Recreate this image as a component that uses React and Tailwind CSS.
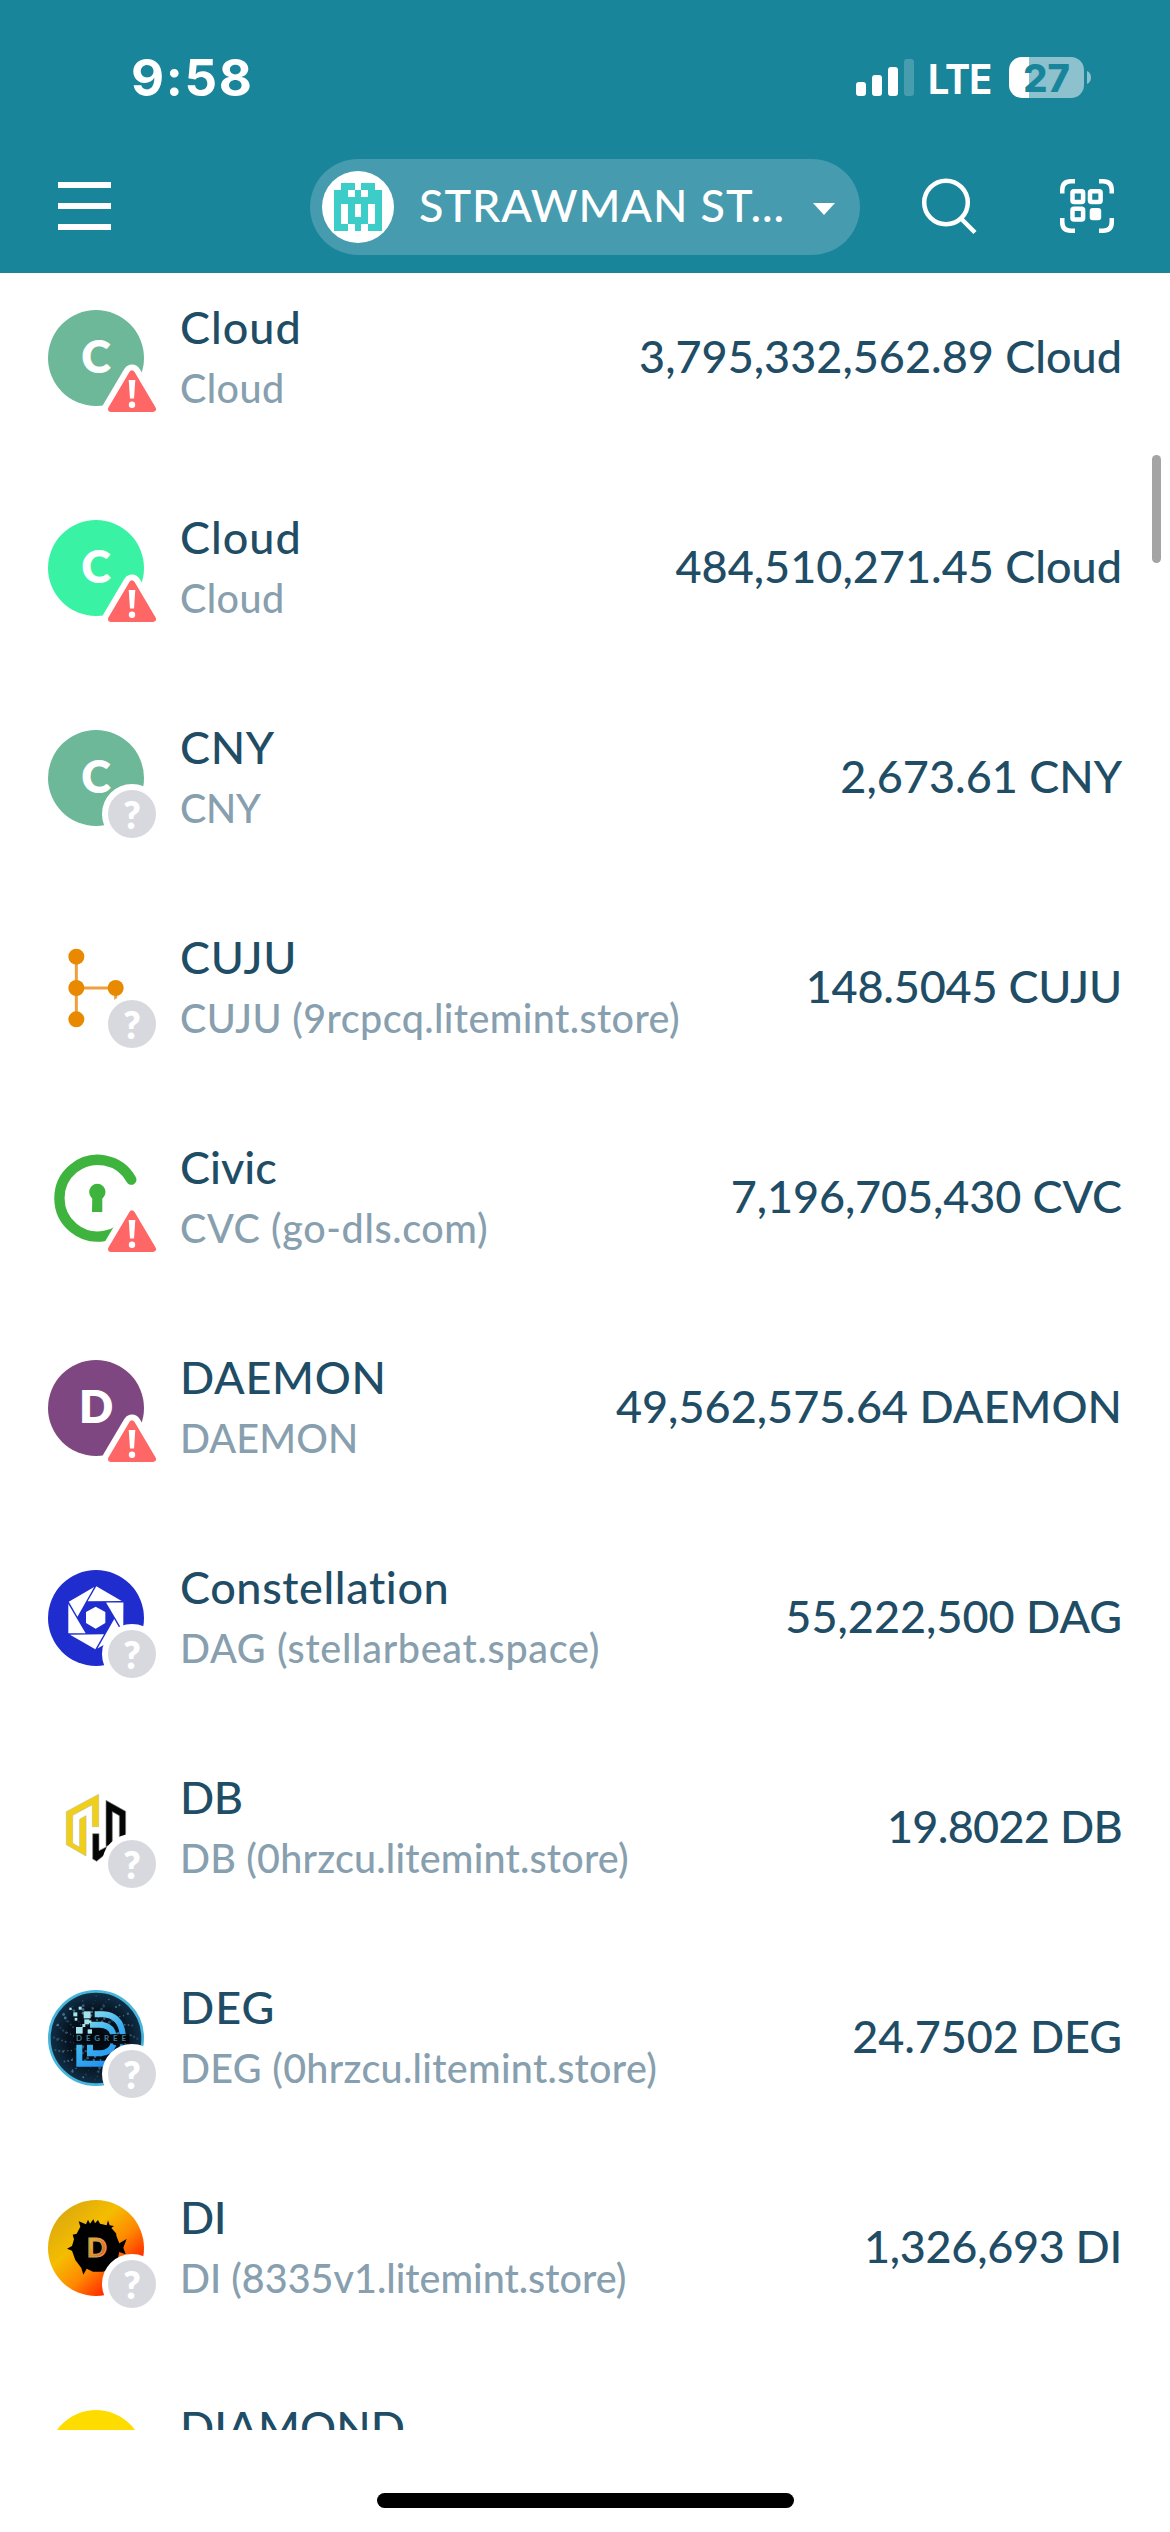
import React from "react";

const IDENTICON = [
  ".XX.XX.",
  "XX.X.XX",
  "XXXXXXX",
  "X.X.X.X",
  "X.X.X.X",
  "X.XXX.X",
  "XX.X.XX",
];

function Identicon() {
  return (
    <div className="flex size-[72px] items-center justify-center rounded-full bg-white">
      <svg viewBox="0 0 7 7" className="size-12" shapeRendering="crispEdges">
        {IDENTICON.flatMap((row, y) =>
          [...row].map((cell, x) =>
            cell === "X" ? <rect key={`${x}-${y}`} x={x} y={y} width="1" height="1" fill="#3dcdc9" /> : null
          )
        )}
      </svg>
    </div>
  );
}

function StatusBar() {
  return (
    <div className="flex h-[159px] items-start justify-between pr-[79px] pl-[131px]">
      <div className="mt-[48px] font-[Inter,sans-serif] text-[51px] leading-[60px] font-bold tracking-[1.7px]">9:58</div>
      <div className="mt-[57px] flex items-start">
        <svg width="58" height="40" viewBox="0 0 58 40" fill="#fff">
          <rect x="0" y="25" width="10" height="14" rx="3" />
          <rect x="16" y="18" width="10" height="21" rx="3" />
          <rect x="32" y="10" width="10" height="29" rx="3" />
          <rect x="48" y="2" width="10" height="37" rx="3" fillOpacity="0.2" />
        </svg>
        <span className="-mt-[3px] ml-[14px] w-[81px] origin-left scale-x-[0.92] font-[Inter,sans-serif] text-[41px] leading-[50px] font-bold tracking-[-1px]">
          LTE
        </span>
        <div className="flex h-[41px] w-[75px] items-center justify-center rounded-[13px] bg-[linear-gradient(90deg,#fff_20px,#8cc1cd_20px)] font-[Inter,sans-serif] text-[38px] leading-none font-extrabold text-[#19859a]">
          27
        </div>
        <svg width="4" height="13" viewBox="0 0 4 13" className="mt-[14px] ml-[3px]">
          <path d="M0 0C2.500 1 4 3.500 4 6.500S2.500 12 0 13Z" fill="#8cc1cd" />
        </svg>
      </div>
    </div>
  );
}

function NavBar() {
  return (
    <div className="flex h-24 items-center pl-[58px]">
      <div className="mb-[3px] flex w-[53px] flex-col gap-[15px]">
        <div className="h-[6px] bg-white" />
        <div className="h-[6px] bg-white" />
        <div className="h-[6px] bg-white" />
      </div>
      <div className="ml-[199px] flex h-24 w-[550px] items-center rounded-full bg-[#469bae] pl-3">
        <Identicon />
        <span className="mb-[4px] ml-[25px] w-[394px] text-[45px] leading-[60px] tracking-[0.9px]">STRAWMAN ST...</span>
        <svg width="22" height="12" viewBox="0 0 22 12" className="mt-[4px]">
          <path d="M0 0H22L11 12Z" fill="#fff" />
        </svg>
      </div>
      <svg width="60" height="60" viewBox="0 0 60 60" className="ml-[60px]" fill="none" stroke="#fff" strokeWidth="4.500">
        <circle cx="26" cy="25.500" r="21.800" />
        <path d="M41 41.500L55 55.500" />
      </svg>
      <svg width="54" height="54" viewBox="0 0 54 54" className="mb-[3px] ml-[80px]" fill="none" stroke="#fff" strokeWidth="4.500">
        <path d="M2.250 14.500V11Q2.250 2.250 11 2.250H15M39 2.250H43Q51.750 2.250 51.750 11V14.500M51.750 39V43Q51.750 51.750 43 51.750H39M15 51.750H11Q2.250 51.750 2.250 43V39" />
        <rect x="12.500" y="12.200" width="10.600" height="10.800" rx="1.500" />
        <rect x="30" y="12.200" width="10.600" height="10.800" rx="1.500" />
        <rect x="12.500" y="29.700" width="10.600" height="10.800" rx="1.500" />
        <rect x="29.700" y="29" width="11.500" height="12.200" rx="3" fill="#fff" stroke="none" />
      </svg>
    </div>
  );
}

function WarningBadge() {
  return (
    <svg viewBox="0 0 66 60" className="absolute top-[48px] left-[51px] h-[60px] w-[66px]">
      <path d="M33 15.500L54 51H12Z" fill="#fff" stroke="#fff" strokeWidth="18" strokeLinejoin="round" />
      <path d="M33 15.500L54 51H12Z" fill="#ff6666" stroke="#ff6666" strokeWidth="6" strokeLinejoin="round" />
      <path d="M29.700 22H36.300L35 40.500H31Z" fill="#fff" />
      <circle cx="33" cy="46.700" r="3.200" fill="#fff" />
    </svg>
  );
}

function UnknownBadge() {
  return (
    <div className="absolute top-[54px] left-[54px] flex size-[60px] items-center justify-center rounded-full border-[6px] border-white bg-[#d8d9df] text-[37px] leading-none font-extrabold text-white">
      ?
    </div>
  );
}

function LetterLogo({ letter, className }) {
  return (
    <div className={`flex size-24 items-center justify-center rounded-full pb-[4px] text-[45px] leading-none font-extrabold text-white ${className}`}>
      {letter}
    </div>
  );
}

const svgProps = { viewBox: "0 0 288 288", className: "size-24 overflow-visible" };

function CujuLogo() {
  return (
    <svg {...svgProps} fill="#e98900">
      <path d="M85 50V238M85 144H203V240" fill="none" stroke="#efa03c" strokeWidth="9" />
      <circle cx="85" cy="50" r="24" />
      <circle cx="85" cy="144" r="24" />
      <circle cx="85" cy="238" r="24" />
      <circle cx="203" cy="144" r="24" />
    </svg>
  );
}

function CivicLogo() {
  return (
    <svg {...svgProps} fill="#3eb33e">
      <path d="M250 89A115 115 0 1 0 250 200" fill="none" stroke="#3eb33e" strokeWidth="31" strokeLinecap="round" />
      <circle cx="148" cy="126" r="24.500" />
      <path d="M133 135H163V186H132Z" />
    </svg>
  );
}

function ConstellationLogo() {
  return (
    <svg {...svgProps}>
      <circle cx="144" cy="144" r="144" fill="#1f2dcf" />
      {[0, 60, 120, 180, 240, 300].map((a) => (
        <path key={a} d="M145 49L221 93L119 94Z" fill="#fff" transform={`rotate(${a} 143.500 143.500)`} />
      ))}
      <path d="M143 110L172 126V159L143 176L114 159V126Z" fill="#fff" />
    </svg>
  );
}

function DbLogo() {
  return (
    <svg {...svgProps}>
      <path
        d="M55 95L152 43V140H133V74L74 106V190L95 202V118L114 107V228L55 194Z"
        fill="#f0cf1a"
        stroke="#c9bd7c"
        strokeWidth="2"
      />
      <path
        d="M174 61L233 94V190H214V107L193 95V190L174 200ZM134 161H153V212L176 200L170 224L146 244L134 237Z"
        fill="#050505"
        stroke="#8a8a8a"
        strokeWidth="2"
      />
    </svg>
  );
}

const SPECKS = Array.from({ length: 170 }, (_, i) => {
  const angle = i * 2.39996;
  const r = 45 + ((i * 53) % 83);
  return { x: 144 + Math.cos(angle) * r, y: 144 + Math.sin(angle) * r, s: 1.5 + ((i * 7) % 5) * 0.7, o: 0.2 + ((i * 11) % 6) * 0.09 };
});

const PIXELS = [
  [107, 64, 21], [76, 67, 12], [64, 53, 7], [92, 50, 9], [80, 84, 8], [109, 88, 15],
  [84, 111, 20], [122, 91, 8], [103, 102, 9], [119, 118, 13],
];

function DegLogo() {
  return (
    <svg {...svgProps}>
      <defs>
        <linearGradient id="deg-letter" gradientUnits="userSpaceOnUse" x1="90" y1="70" x2="200" y2="240">
          <stop offset="0" stopColor="#9be4ee" />
          <stop offset="0.45" stopColor="#3fb4ee" />
          <stop offset="1" stopColor="#1486f5" />
        </linearGradient>
        <radialGradient id="deg-back">
          <stop offset="0" stopColor="#02060c" />
          <stop offset="0.6" stopColor="#06131f" />
          <stop offset="1" stopColor="#103049" />
        </radialGradient>
      </defs>
      <circle cx="144" cy="144" r="140" fill="url(#deg-back)" stroke="#45b5da" strokeWidth="8" />
      {SPECKS.map((d, i) => (
        <circle key={i} cx={d.x} cy={d.y} r={d.s} fill="#6f9fc4" opacity={d.o} />
      ))}
      <path
        d="M140 73H165Q218 76 224 133M126 104H155Q190 106 196 133M94 164V221H170Q214 214 226 164M126 164V190H158Q188 188 196 164"
        fill="none"
        stroke="url(#deg-letter)"
        strokeWidth="18"
      />
      {PIXELS.map(([x, y, s]) => (
        <rect key={`${x}-${y}`} x={x} y={y} width={s} height={s} fill="#a4e2ec" />
      ))}
      <rect x="78" y="133" width="166" height="26" fill="#03080e" />
      <text x="84" y="154" fontSize="24" fontWeight="700" fill="#3d7f98" textLength="150" fontFamily="Lato, sans-serif">
        DEGREE
      </text>
    </svg>
  );
}

function DiLogo() {
  return (
    <svg {...svgProps}>
      <defs>
        <linearGradient id="di-back" x1="0.1" y1="0.1" x2="0.85" y2="0.9">
          <stop offset="0" stopColor="#dba80f" />
          <stop offset="0.36" stopColor="#f4bd00" />
          <stop offset="0.62" stopColor="#ff8a00" />
          <stop offset="0.84" stopColor="#ff3a00" />
          <stop offset="1" stopColor="#ff1500" />
        </linearGradient>
        <linearGradient id="di-letter" x1="0" y1="0" x2="1" y2="1">
          <stop offset="0.3" stopColor="#efa51c" />
          <stop offset="1" stopColor="#ef3d12" />
        </linearGradient>
      </defs>
      <circle cx="144" cy="144" r="144" fill="url(#di-back)" />
      <path
        d="M97 80L92 64L114 73L120 59L126 71L136 58L141 70L150 60L156 71L176 76L180 61L185 76L198 78L190 84L204 100L206 110L214 130L236 117L226 143L233 163L214 156L208 182L190 204L165 215H135L116 206L106 224L100 204L82 180L72 152L57 146L72 138L78 118L74 104L86 101Z"
        fill="#000"
      />
      <text x="147" y="171" textAnchor="middle" fontSize="80" fontWeight="700" fontFamily="Lato, sans-serif" fill="url(#di-letter)" stroke="#c9a46c" strokeWidth="3">
        D
      </text>
    </svg>
  );
}

const ASSETS = [
  { name: "Cloud", nt: "tracking-[1px]", sub: "Cloud", st: "tracking-[0.4px]", amount: "3,795,332,562.89 Cloud", at: "tracking-[0px]", badge: "warn", logo: <LetterLogo letter="C" className="bg-[#6db899]" /> },
  { name: "Cloud", nt: "tracking-[1px]", sub: "Cloud", st: "tracking-[0.4px]", amount: "484,510,271.45 Cloud", at: "tracking-[0px]", badge: "warn", logo: <LetterLogo letter="C" className="bg-[#3af2a3]" /> },
  { name: "CNY", nt: "tracking-[0.7px]", sub: "CNY", st: "tracking-[-0.3px]", amount: "2,673.61 CNY", at: "tracking-[0px]", badge: "unknown", logo: <LetterLogo letter="C" className="bg-[#6db899]" /> },
  { name: "CUJU", nt: "tracking-[0.7px]", sub: "CUJU (9rcpcq.litemint.store)", st: "tracking-[0.4px]", amount: "148.5045 CUJU", at: "tracking-[-0.2px]", badge: "unknown", logo: <CujuLogo /> },
  { name: "Civic", nt: "tracking-[0px]", sub: "CVC (go-dls.com)", st: "tracking-[0.6px]", amount: "7,196,705,430 CVC", at: "tracking-[-0.1px]", badge: "warn", logo: <CivicLogo /> },
  { name: "DAEMON", nt: "tracking-[0.7px]", sub: "DAEMON", st: "tracking-[0.1px]", amount: "49,562,575.64 DAEMON", at: "tracking-[0px]", badge: "warn", logo: <LetterLogo letter="D" className="bg-[#7f4782]" /> },
  { name: "Constellation", nt: "tracking-[0.6px]", sub: "DAG (stellarbeat.space)", st: "tracking-[0.7px]", amount: "55,222,500 DAG", at: "tracking-[0px]", badge: "unknown", logo: <ConstellationLogo /> },
  { name: "DB", nt: "tracking-[-0.5px]", sub: "DB (0hrzcu.litemint.store)", st: "tracking-[0.2px]", amount: "19.8022 DB", at: "tracking-[-0.7px]", badge: "unknown", logo: <DbLogo /> },
  { name: "DEG", nt: "tracking-[1px]", sub: "DEG (0hrzcu.litemint.store)", st: "tracking-[0.3px]", amount: "24.7502 DEG", at: "tracking-[-0.1px]", badge: "unknown", logo: <DegLogo /> },
  { name: "DI", nt: "tracking-[-0.4px]", sub: "DI (8335v1.litemint.store)", st: "tracking-[0px]", amount: "1,326,693 DI", at: "tracking-[-0.3px]", badge: "unknown", logo: <DiLogo /> },
  { name: "DIAMOND", nt: "tracking-[0.1px]", logo: <LetterLogo className="bg-[#ffdc00]" /> },
];

function AssetRow({ asset }) {
  return (
    <div className="flex h-[210px] shrink-0 items-start px-12">
      <div className="relative mt-[57px] size-24 shrink-0">
        {asset.logo}
        {asset.badge === "warn" && <WarningBadge />}
        {asset.badge === "unknown" && <UnknownBadge />}
      </div>
      <div className="mt-[44px] ml-[36px] flex flex-1 flex-col whitespace-nowrap">
        <span className={`text-[45px] leading-[60px] text-[#1f4d66] ${asset.nt}`}>{asset.name}</span>
        {asset.sub && (
          <span className={`mt-[5px] text-[39.5px] leading-[52px] text-[#879fae] ${asset.st}`}>{asset.sub}</span>
        )}
      </div>
      {asset.amount && (
        <div className={`mt-[73px] text-[45px] leading-[60px] whitespace-nowrap text-[#1f4d66] ${asset.at}`}>{asset.amount}</div>
      )}
    </div>
  );
}

export default function App() {
  return (
    <div className="relative flex h-[2532px] w-[1170px] flex-col overflow-hidden bg-white font-[Lato,sans-serif] font-medium">
      <header className="h-[273px] shrink-0 bg-[#19859a] text-white">
        <StatusBar />
        <NavBar />
      </header>
      <main className="h-[2157px] shrink-0 overflow-hidden">
        <div className="-mt-5 flex flex-col">
          {ASSETS.map((asset, i) => (
            <AssetRow key={i} asset={asset} />
          ))}
        </div>
      </main>
      <div className="flex flex-1 items-end justify-center pb-6">
        <div className="h-[15px] w-[417px] rounded-full bg-black" />
      </div>
      <div className="absolute top-[455px] right-[9px] h-[108px] w-[9px] rounded-full bg-[#a4a4a4]" />
    </div>
  );
}
